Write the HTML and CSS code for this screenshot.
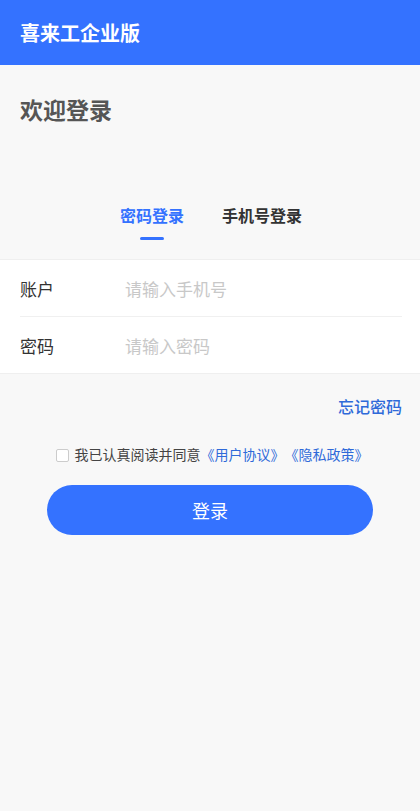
FILE: index.html
```html
<!DOCTYPE html>
<html lang="zh-CN">
<head>
  <meta charset="UTF-8"/>
  <title>喜来工企业版</title>
  <link rel="stylesheet" href="styles.css">
</head>
<body>
  <header class="topbar">喜来工企业版</header>

  <main>
    <h1 class="welcome">欢迎登录</h1>

    <div class="tabs">
      <div class="tab active">密码登录</div>
      <div class="tab">手机号登录</div>
    </div>

    <div class="form">
      <div class="row">
        <span class="label">账户</span>
        <input type="text" placeholder="请输入手机号">
      </div>
      <div class="row">
        <span class="label">密码</span>
        <input type="password" placeholder="请输入密码">
      </div>
    </div>

    <div class="forgot"><a href="#">忘记密码</a></div>

    <label class="agree">
      <span class="box"></span>
      我已认真阅读并同意<a href="#">《用户协议》</a><a href="#">《隐私政策》</a>
    </label>

    <button class="login-btn">登录</button>
  </main>
</body>
</html>
```

FILE: styles.css
```css
body {
  margin: 0;
  background: #f8f8f8;
  font-family: "Noto Sans CJK SC", "Noto Sans", sans-serif;
  height: 811px;
}
.topbar {
  height: 65px;
  background: #3472ff;
  color: #fff;
  font-size: 20px;
  font-weight: bold;
  display: flex;
  align-items: center;
  padding-left: 20px;
  box-sizing: border-box;
}
.welcome {
  margin: 0;
  padding: 29px 20px 0;
  font-size: 23px;
  font-weight: bold;
  color: #555;
  line-height: 30px;
}
.tabs {
  display: flex;
  justify-content: center;
  gap: 38px;
  margin-top: 79px;
  padding-left: 2px;
}
.tab {
  font-size: 16px;
  font-weight: bold;
  color: #333;
  line-height: 24px;
  height: 56px;
  position: relative;
}
.tab.active { color: #3472ff; }
.tab.active::after {
  content: "";
  position: absolute;
  left: 50%;
  margin-left: -12px;
  top: 34px;
  width: 24px;
  height: 3px;
  border-radius: 2px;
  background: #3472ff;
}
.form {
  background: #fff;
  border-top: 1px solid #efefef;
  border-bottom: 1px solid #efefef;
  padding: 0 18px 0 20px;
}
.row {
  display: flex;
  align-items: center;
  height: 56px;
}
.row + .row { border-top: 1px solid #f0f0f0; }
.label {
  width: 105px;
  font-size: 17px;
  color: #333;
}
.row input {
  flex: 1;
  border: none;
  outline: none;
  font-size: 17px;
  font-family: inherit;
  color: #333;
  background: transparent;
  padding: 0;
}
.row input::placeholder { color: #c8c8c8; }
.forgot {
  text-align: right;
  padding: 20px 18px 0;
  font-size: 16px;
  line-height: 24px;
}
a { color: #2f6ad9; text-decoration: none; }
.forgot a { color: #2f6ad9; font-weight: 500; }
.agree {
  display: flex;
  align-items: center;
  justify-content: center;
  margin-top: 26px;
  font-size: 14px;
  color: #444;
  line-height: 20px;
  padding-left: 4px;
}
.agree .box {
  width: 11px;
  height: 11px;
  border: 1px solid #ccc;
  border-radius: 2px;
  background: #fff;
  margin-right: 6px;
  margin-top: 3px;
}
.agree a { color: #2f6ad9; }
.login-btn {
  display: block;
  margin: 21px auto 0;
  width: 326px;
  height: 50px;
  border: none;
  border-radius: 25px;
  background: #3472ff;
  color: #fff;
  font-size: 18px;
  font-family: inherit;
  cursor: pointer;
}
```
